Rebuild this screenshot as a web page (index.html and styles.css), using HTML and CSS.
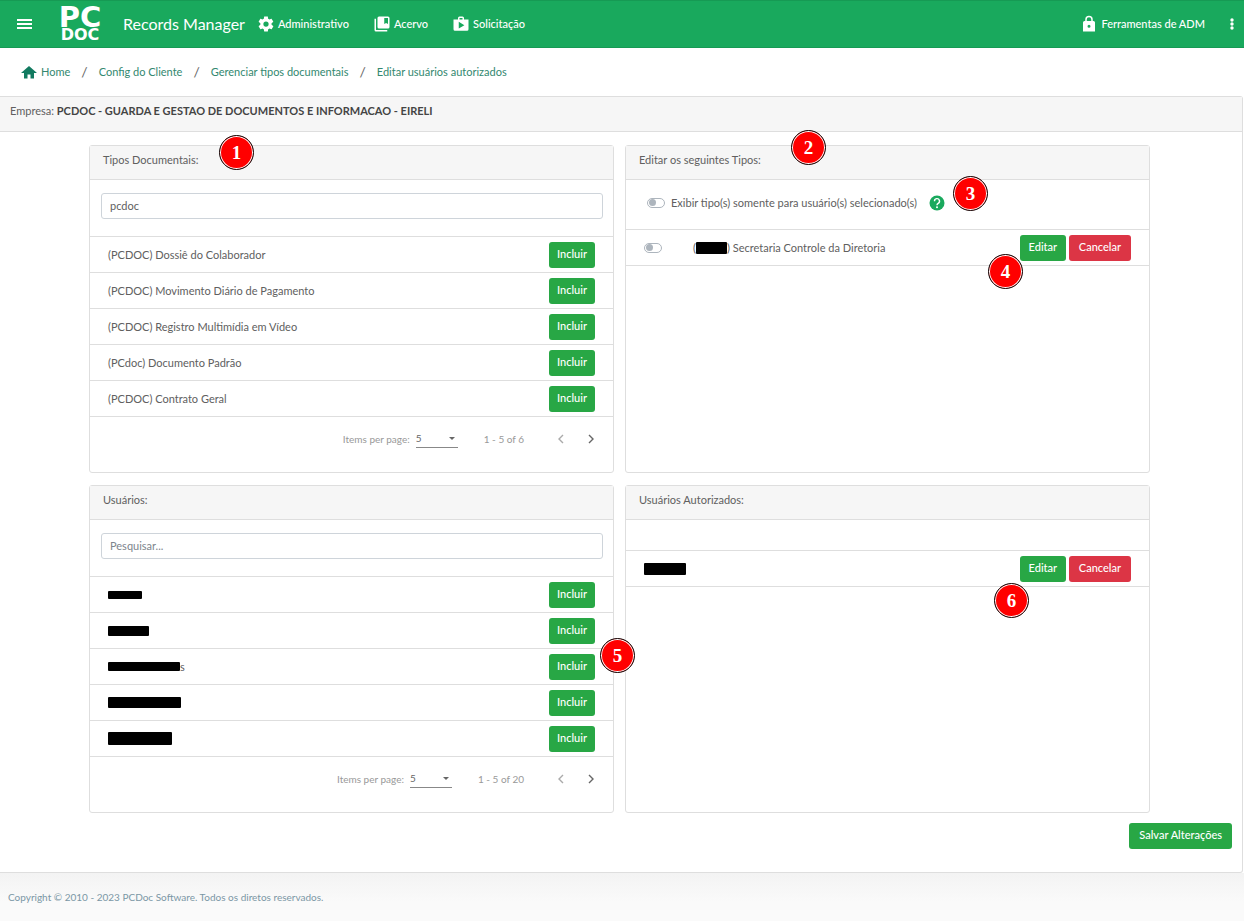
FILE: index.html
```html
<!DOCTYPE html>
<html lang="pt-BR">
<head>
<meta charset="utf-8">
<title>Records Manager</title>
<link rel="stylesheet" href="styles.css">
</head>
<body>
<header class="topbar">
  <button class="icon-btn menu-btn" aria-label="Menu"><svg width="15" height="11" viewBox="0 0 15 11"><path d="M0 0h15v2H0zM0 4h15v2H0zM0 8h15v2H0z"/></svg></button>
  <a class="logo" href="#"><span class="logo-pc">PC</span><span class="logo-doc">DOC</span></a>
  <span class="brand">Records Manager</span>
  <nav class="nav">
    <a href="#"><svg width="18" height="18" viewBox="0 0 24 24"><path d="M19.4 13a7.800 7.800 0 0 0 0-2l2.100-1.700c.2-.1.200-.4.100-.6l-2-3.500c-.1-.2-.4-.3-.6-.2l-2.500 1a7.300 7.300 0 0 0-1.700-1L14.500 2.400c0-.2-.2-.4-.5-.4h-4c-.3 0-.5.200-.5.400L9.100 5a7.700 7.700 0 0 0-1.700 1l-2.500-1c-.2-.1-.5 0-.6.200l-2 3.500c-.1.200-.1.500.1.600L4.500 11a8 8 0 0 0 0 2l-2.100 1.700c-.2.100-.2.400-.1.600l2 3.500c.1.200.4.300.6.200l2.500-1c.5.400 1.100.7 1.700 1l.4 2.600c0 .2.200.4.500.4h4c.3 0 .5-.2.500-.4l.4-2.600c.6-.3 1.200-.6 1.700-1l2.500 1c.2.100.5 0 .6-.2l2-3.500c.1-.2.100-.5-.1-.6zM12 15.500a3.500 3.500 0 1 1 0-7 3.500 3.500 0 0 1 0 7z"/></svg>Administrativo</a>
    <a href="#"><svg width="18" height="18" viewBox="0 0 24 24"><path d="M4 5H2v15a2 2 0 0 0 2 2h15v-2H4z"/><path fill-rule="evenodd" d="M20 2H8a2 2 0 0 0-2 2v12a2 2 0 0 0 2 2h12a2 2 0 0 0 2-2V4a2 2 0 0 0-2-2zm0 10-2.500-1.500L15 12V4h5z"/></svg>Acervo</a>
    <a href="#"><svg width="18" height="18" viewBox="0 0 24 24"><path fill-rule="evenodd" d="M16 6V4a2 2 0 0 0-2-2h-4a2 2 0 0 0-2 2v2H2v13a2 2 0 0 0 2 2h16a2 2 0 0 0 2-2V6zm-6-2h4v2h-4zM9 18V9l7.500 4.500z"/></svg>Solicitação</a>
  </nav>
  <a class="adm" href="#"><svg width="18" height="18" viewBox="0 0 24 24"><path fill-rule="evenodd" d="M18 8h-1V6A5 5 0 0 0 7 6v2H6a2 2 0 0 0-2 2v12h16V10a2 2 0 0 0-2-2zm-6 9a2 2 0 1 1 0-4 2 2 0 0 1 0 4zm3-9H9V6a3 3 0 0 1 6 0z"/></svg>Ferramentas de ADM</a>
  <button class="icon-btn more-btn" aria-label="Mais opções"><svg width="4" height="12" viewBox="0 0 4 12"><circle cx="2" cy="2" r="1.700"/><circle cx="2" cy="6" r="1.700"/><circle cx="2" cy="10" r="1.700"/></svg></button>
</header>

<nav class="breadcrumb" aria-label="Navegação">
  <a href="#"><svg width="16" height="14" viewBox="0 0 16 14"><path d="M8 1 0 8h3v5.500h3.500V9.500h3v4H13V8h3z"/></svg>Home</a>
  <span class="sep">/</span><a href="#">Config do Cliente</a>
  <span class="sep">/</span><a href="#">Gerenciar tipos documentais</a>
  <span class="sep">/</span><a href="#">Editar usuários autorizados</a>
</nav>

<main class="card">
  <div class="card-head">Empresa: <strong>PCDOC - GUARDA E GESTAO DE DOCUMENTOS E INFORMACAO - EIRELI</strong></div>
  <div class="grid">
    <section class="panel">
      <h2><label for="tipos">Tipos Documentais:</label></h2>
      <div class="search"><input id="tipos" type="text" value="pcdoc"></div>
      <ul class="rows">
        <li><span>(PCDOC) Dossiê do Colaborador</span><button class="btn">Incluir</button></li>
        <li><span>(PCDOC) Movimento Diário de Pagamento</span><button class="btn">Incluir</button></li>
        <li><span>(PCDOC) Registro Multimídia em Vídeo</span><button class="btn">Incluir</button></li>
        <li><span>(PCdoc) Documento Padrão</span><button class="btn">Incluir</button></li>
        <li><span>(PCDOC) Contrato Geral</span><button class="btn">Incluir</button></li>
      </ul>
      <div class="pager">
        <label for="pp1">Items per page:</label>
        <span class="select"><select id="pp1"><option>5</option><option>10</option></select></span>
        <span class="range">1 - 5 of 6</span>
        <button class="page" aria-label="Anterior" disabled><svg width="6" height="10" viewBox="0 0 6 10"><path d="M5 1 1 5l4 4"/></svg></button>
        <button class="page" aria-label="Próxima"><svg width="6" height="10" viewBox="0 0 6 10"><path d="m1 1 4 4-4 4"/></svg></button>
      </div>
      <span class="mark m1">1</span>
    </section>

    <section class="panel">
      <h2>Editar os seguintes Tipos:</h2>
      <div class="filter">
        <input class="switch" id="somente" type="checkbox"><label for="somente">Exibir tipo(s) somente para usuário(s) selecionado(s)</label>
        <svg width="16" height="16" viewBox="0 0 16 16"><circle cx="8" cy="8" r="7.500" fill="#19a95d"/><path d="M5.500 6.200a2.500 2.500 0 1 1 3.700 2.100Q8 9 8 10.200" fill="none" stroke="#fff" stroke-width="1.400"/><circle cx="8" cy="12.200" r="1" fill="#fff"/></svg>
      </div>
      <ul class="rows">
        <li><input class="switch" id="sec" type="checkbox"><label class="type" for="sec">(<span class="redact r0"></span>) Secretaria Controle da Diretoria</label><span class="actions"><button class="btn">Editar</button><button class="btn danger">Cancelar</button></span></li>
      </ul>
      <span class="mark m2">2</span><span class="mark m3">3</span><span class="mark m4">4</span>
    </section>

    <section class="panel">
      <h2><label for="usuarios">Usuários:</label></h2>
      <div class="search"><input id="usuarios" type="text" placeholder="Pesquisar..."></div>
      <ul class="rows">
        <li><span class="redact r1"></span><button class="btn">Incluir</button></li>
        <li><span class="redact r2"></span><button class="btn">Incluir</button></li>
        <li><span class="name"><span class="redact r3"></span>s</span><button class="btn">Incluir</button></li>
        <li><span class="redact r4"></span><button class="btn">Incluir</button></li>
        <li><span class="redact r5"></span><button class="btn">Incluir</button></li>
      </ul>
      <div class="pager">
        <label for="pp2">Items per page:</label>
        <span class="select"><select id="pp2"><option>5</option><option>10</option></select></span>
        <span class="range">1 - 5 of 20</span>
        <button class="page" aria-label="Anterior" disabled><svg width="6" height="10" viewBox="0 0 6 10"><path d="M5 1 1 5l4 4"/></svg></button>
        <button class="page" aria-label="Próxima"><svg width="6" height="10" viewBox="0 0 6 10"><path d="m1 1 4 4-4 4"/></svg></button>
      </div>
      <span class="mark m5">5</span>
    </section>

    <section class="panel">
      <h2>Usuários Autorizados:</h2>
      <div class="spacer"></div>
      <ul class="rows">
        <li><span class="redact r6"></span><span class="actions"><button class="btn">Editar</button><button class="btn danger">Cancelar</button></span></li>
      </ul>
      <span class="mark m6">6</span>
    </section>
  </div>
  <div class="save"><button class="btn">Salvar Alterações</button></div>
</main>
<footer class="footer">Copyright © 2010 - 2023 PCDoc Software. Todos os diretos reservados.</footer>
</body>
</html>
```
FILE: styles.css
```css
* { box-sizing: border-box; }
body {
  margin: 0;
  min-height: 100vh;
  display: flex;
  flex-direction: column;
  background: #fff;
  color: #606060;
  font: 11px/16px Lato, "Open Sans", sans-serif;
}
a { color: inherit; text-decoration: none; }
button, input, select { font: inherit; color: inherit; }
svg { flex: none; }

.topbar {
  display: flex;
  align-items: center;
  height: 48px;
  padding: 0 10px 0 17px;
  background: #19a95d;
  border-top: 1px solid #169a54;
  border-bottom: 1px solid #169a54;
  color: #fff;
}
.topbar svg { fill: #fff; }
.icon-btn { display: flex; padding: 0; border: 0; background: none; }
.logo {
  display: flex;
  flex-direction: column;
  align-items: center;
  width: 56px;
  margin-left: 20px;
  font-family: "DejaVu Sans", sans-serif;
  font-weight: bold;
}
.logo-pc { font-size: 29px; line-height: 22px; }
.logo-doc { font-size: 16px; line-height: 14px; }
.brand { margin-left: 15px; font-size: 16px; }
.nav { display: flex; gap: 24px; margin-left: 12px; }
.nav a, .adm { display: flex; align-items: center; gap: 3px; font-weight: 500; }
.adm { margin-left: auto; }
.more-btn { margin-left: 25px; }

.breadcrumb { display: flex; align-items: center; height: 48px; padding-left: 21px; color: #33886f; }
.breadcrumb a { display: flex; align-items: center; gap: 4px; }
.breadcrumb svg { fill: #127a60; }
.sep { margin: 0 11px; color: #666; font-size: 14px; }

.card {
  margin-right: 1px;
  border: 1px solid #dedede;
  border-left: 0;
  border-radius: 0 3px 3px 0;
  background: #fff;
}
.card-head { height: 35px; padding: 6px 10px; background: #f6f6f6; border-bottom: 1px solid #dedede; }
.card-head strong { color: #444; }
.grid {
  display: grid;
  grid-template-columns: 1fr 1fr;
  gap: 12px 11px;
  padding: 13px 92px 0 89px;
}
.panel { position: relative; min-height: 328px; border: 1px solid #dedede; border-radius: 3px; }
.panel h2 {
  height: 34px;
  margin: 0;
  padding: 6px 13px;
  background: #f6f6f6;
  border-bottom: 1px solid #dedede;
  font-size: inherit;
  font-weight: normal;
}
.search { padding: 13px 10px 17px 11px; }
.search input {
  display: block;
  width: 100%;
  height: 26px;
  padding: 0 8px 2px;
  border: 1px solid #ced4da;
  border-radius: 3px;
  background: #fff;
}
.search input::placeholder { color: #7d858c; }
.rows { margin: 0; padding: 0; list-style: none; border-top: 1px solid #dedede; }
.rows li {
  display: flex;
  align-items: center;
  height: 36px;
  padding: 0 18px;
  border-bottom: 1px solid #dedede;
}
.rows .btn { margin-left: auto; }
.btn {
  min-width: 46px;
  height: 26px;
  padding: 0 8px 2px;
  border: 0;
  border-radius: 3px;
  background: #28a745;
  color: #fff;
  font-weight: 500;
}
.btn.danger { padding: 0 10px 2px; background: #dc3545; }
.actions { display: flex; gap: 3px; margin-left: auto; }
.pager {
  display: flex;
  align-items: center;
  justify-content: flex-end;
  padding: 12px 19px 0 0;
  color: #999;
  font-size: 10px;
}
.select { position: relative; margin-left: 6px; }
.select select {
  display: block;
  width: 42px;
  height: 19px;
  padding: 0;
  appearance: none;
  border: 0;
  border-bottom: 1px solid #888;
  border-radius: 0;
  background: none;
  color: #666;
}
.select::after {
  content: "";
  position: absolute;
  right: 3px;
  top: 8px;
  border: 3px solid transparent;
  border-top-color: #666;
  border-bottom: 0;
}
.range { margin: 0 34px 0 26px; }
.page { display: flex; padding: 0; border: 0; background: none; }
.page + .page { margin-left: 24px; }
.page svg { fill: none; stroke: #666; stroke-width: 1.400; }
.page:disabled svg { stroke: #aaa; }

.filter { display: flex; align-items: center; height: 49px; padding: 0 21px 4px; }
.filter svg { margin-left: 12px; }
.filter label { margin-left: 6px; }
.switch {
  flex: none;
  display: flex;
  align-items: center;
  width: 18px;
  height: 10px;
  margin: 0;
  padding: 1px;
  appearance: none;
  border: 1px solid #adb5bd;
  border-radius: 5px;
}
.switch::before { content: ""; width: 7px; height: 7px; border-radius: 50%; background: #adb5bd; }
.type { display: flex; align-items: center; margin-left: 31px; white-space: pre; }
.name { display: flex; align-items: center; }
.spacer { height: 30px; }
.redact { display: block; border-radius: 1px; background: #000; }
.r0 { width: 31px; height: 12px; }
.r1 { width: 34px; height: 8px; }
.r2 { width: 41px; height: 10px; }
.r3 { width: 72px; height: 9px; }
.r4 { width: 73px; height: 11px; }
.r5 { width: 64px; height: 13px; }
.r6 { width: 42px; height: 12px; }

.mark {
  position: absolute;
  z-index: 1;
  display: flex;
  align-items: center;
  justify-content: center;
  width: 35px;
  height: 35px;
  border: 1px solid #111;
  border-radius: 50%;
  background: #f00;
  box-shadow: inset 0 0 0 1px #fff;
  color: #fff;
  font: bold 19px/20px "Liberation Serif", serif;
}
.m1 { left: 129px; top: -11px; }
.m2 { left: 165px; top: -16px; }
.m3 { left: 327px; top: 30px; }
.m4 { right: 126px; top: 108px; }
.m5 { right: -22px; top: 152px; }
.m6 { right: 120px; top: 97px; }

.save { display: flex; justify-content: flex-end; padding: 10px 10px 23px; }
.save .btn { padding: 0 10px 2px; }
.footer {
  flex: 1;
  padding: 16px 8px;
  background: linear-gradient(#f3f3f3, #fafafa 60%);
  color: #7b97a5;
  font-size: 10px;
}
```
